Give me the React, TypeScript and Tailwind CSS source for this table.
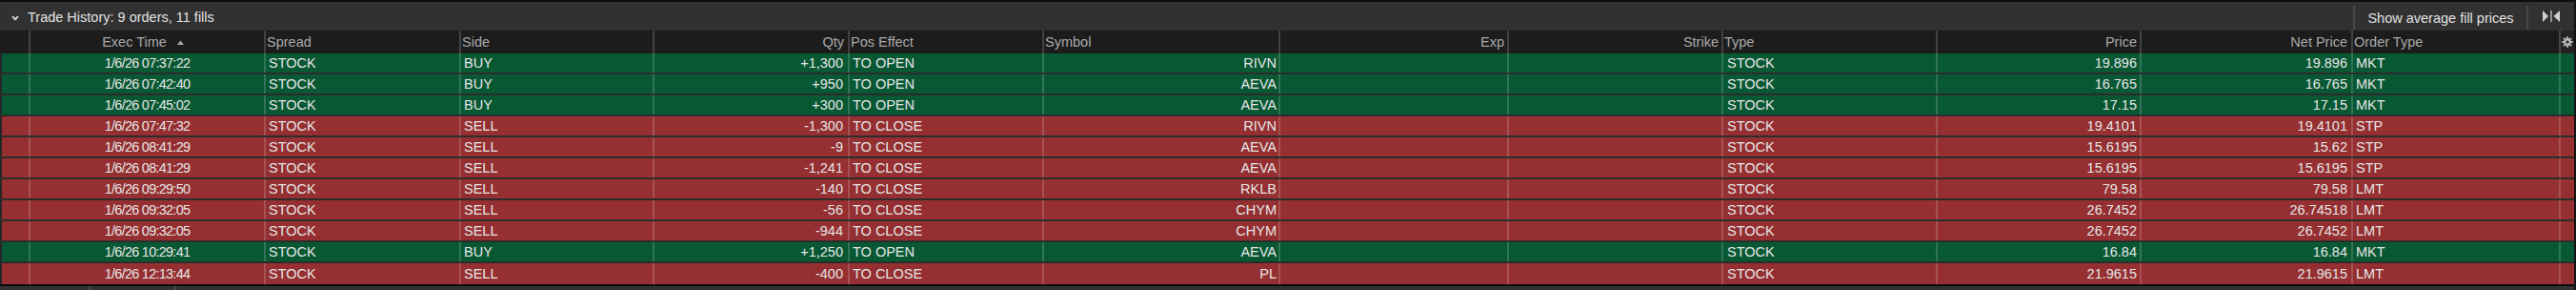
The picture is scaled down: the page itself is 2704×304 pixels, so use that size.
import React from 'react';

type Row = {
  t: string;
  side: string;
  qty: string;
  pos: string;
  sym: string;
  price: string;
  net: string;
  ot: string;
  buy: boolean;
};

const rows: Row[] = [
  { t: '1/6/26 07:37:22', side: 'BUY', qty: '+1,300', pos: 'TO OPEN', sym: 'RIVN', price: '19.896', net: '19.896', ot: 'MKT', buy: true },
  { t: '1/6/26 07:42:40', side: 'BUY', qty: '+950', pos: 'TO OPEN', sym: 'AEVA', price: '16.765', net: '16.765', ot: 'MKT', buy: true },
  { t: '1/6/26 07:45:02', side: 'BUY', qty: '+300', pos: 'TO OPEN', sym: 'AEVA', price: '17.15', net: '17.15', ot: 'MKT', buy: true },
  { t: '1/6/26 07:47:32', side: 'SELL', qty: '-1,300', pos: 'TO CLOSE', sym: 'RIVN', price: '19.4101', net: '19.4101', ot: 'STP', buy: false },
  { t: '1/6/26 08:41:29', side: 'SELL', qty: '-9', pos: 'TO CLOSE', sym: 'AEVA', price: '15.6195', net: '15.62', ot: 'STP', buy: false },
  { t: '1/6/26 08:41:29', side: 'SELL', qty: '-1,241', pos: 'TO CLOSE', sym: 'AEVA', price: '15.6195', net: '15.6195', ot: 'STP', buy: false },
  { t: '1/6/26 09:29:50', side: 'SELL', qty: '-140', pos: 'TO CLOSE', sym: 'RKLB', price: '79.58', net: '79.58', ot: 'LMT', buy: false },
  { t: '1/6/26 09:32:05', side: 'SELL', qty: '-56', pos: 'TO CLOSE', sym: 'CHYM', price: '26.7452', net: '26.74518', ot: 'LMT', buy: false },
  { t: '1/6/26 09:32:05', side: 'SELL', qty: '-944', pos: 'TO CLOSE', sym: 'CHYM', price: '26.7452', net: '26.7452', ot: 'LMT', buy: false },
  { t: '1/6/26 10:29:41', side: 'BUY', qty: '+1,250', pos: 'TO OPEN', sym: 'AEVA', price: '16.84', net: '16.84', ot: 'MKT', buy: true },
  { t: '1/6/26 12:13:44', side: 'SELL', qty: '-400', pos: 'TO CLOSE', sym: 'PL', price: '21.9615', net: '21.9615', ot: 'LMT', buy: false },
];

const DIV = 'border-l-2 border-[#ffffff2b]';

function Gear() {
  const teeth = [0, 45, 90, 135];
  return (
    <svg width="12" height="12" viewBox="0 0 12 12">
      {teeth.map((a) => (
        <rect key={a} x="5" y="0.2" width="2" height="11.6" fill="#b4b4b4" transform={`rotate(${a} 6 6)`} />
      ))}
      <circle cx="6" cy="6" r="3.9" fill="#b4b4b4" />
      <circle cx="6" cy="6" r="1.6" fill="#2a2a2a" />
    </svg>
  );
}

function HeaderRow() {
  const h = 'h-full flex items-center text-[#a9a9a9] whitespace-nowrap';
  return (
    <div className="flex h-[24px] bg-[#1c1c1c] shrink-0">
      <div className={`w-[30px] ${h}`} />
      <div className={`w-[247px] ${DIV} ${h} justify-center pr-[9px]`}>
        <span>Exec Time</span>
        <svg className="ml-[11px]" width="7" height="5" viewBox="0 0 7 5">
          <polygon points="0,5 3.5,0.5 7,5" fill="#a9a9a9" />
        </svg>
      </div>
      <div className={`w-[205px] ${DIV} ${h} pl-[1px]`}>Spread</div>
      <div className={`w-[203px] ${DIV} ${h} pl-[1px]`}>Side</div>
      <div className={`w-[205px] ${DIV} ${h} justify-end pr-[4px]`}>Qty</div>
      <div className={`w-[204px] ${DIV} ${h} pl-[1px]`}>Pos Effect</div>
      <div className={`w-[248px] ${DIV} ${h} pl-[1px]`}>Symbol</div>
      <div className={`w-[240px] ${DIV} ${h} justify-end pr-[3px]`}>Exp</div>
      <div className={`w-[225px] ${DIV} ${h} justify-end pr-[3px]`}>Strike</div>
      <div className={`w-[225px] ${DIV} ${h} pl-[1px]`}>Type</div>
      <div className={`w-[214px] ${DIV} ${h} justify-end pr-[3px]`}>Price</div>
      <div className={`w-[222px] ${DIV} ${h} justify-end pr-[4px]`}>Net Price</div>
      <div className={`w-[218px] ${DIV} ${h} pl-[1px]`}>Order Type</div>
      <div className={`w-[16px] ${DIV} ${h} justify-center bg-[#222222]`}>
        <Gear />
      </div>
    </div>
  );
}

function DataRow({ r, last }: { r: Row; last: boolean }) {
  const bg = r.buy ? 'bg-[#085834]' : 'bg-[#952f31]';
  const c = 'h-full flex items-center whitespace-nowrap';
  return (
    <div className={last ? 'h-[22px] shrink-0' : 'h-[22px] border-b-2 border-[#2c2c2c] shrink-0'}>
      <div className={`flex h-full ${bg} text-[#e6e6e6]`}>
        <div className={`w-[30px] ${c} border-l-2 border-[#262626]`} />
        <div className={`w-[247px] ${DIV} ${c} justify-center tracking-[-0.75px]`}>{r.t}</div>
        <div className={`w-[205px] ${DIV} ${c} pl-[3px]`}>STOCK</div>
        <div className={`w-[203px] ${DIV} ${c} pl-[3px]`}>{r.side}</div>
        <div className={`w-[205px] ${DIV} ${c} justify-end pr-[5px]`}>{r.qty}</div>
        <div className={`w-[204px] ${DIV} ${c} pl-[3px]`}>{r.pos}</div>
        <div className={`w-[248px] ${DIV} ${c} justify-end pr-[2px]`}>{r.sym}</div>
        <div className={`w-[240px] ${DIV} ${c}`} />
        <div className={`w-[225px] ${DIV} ${c}`} />
        <div className={`w-[225px] ${DIV} ${c} pl-[4px]`}>STOCK</div>
        <div className={`w-[214px] ${DIV} ${c} justify-end pr-[3px]`}>{r.price}</div>
        <div className={`w-[222px] ${DIV} ${c} justify-end pr-[4px]`}>{r.net}</div>
        <div className={`w-[218px] ${DIV} ${c} pl-[3px]`}>{r.ot}</div>
        <div className={`w-[16px] ${DIV} ${c}`} />
      </div>
    </div>
  );
}

export default function App() {
  return (
    <div className="w-[2704px] h-[304px] overflow-hidden flex flex-col bg-[#1a1a1a] border-r-2 border-[#141414] font-['Liberation_Sans',Arial,sans-serif] text-[14.5px] leading-none">
      <div className="h-[2px] bg-[#0e0e0e] shrink-0" />
      <div className="h-[30px] bg-[#313131] flex items-stretch shrink-0">
        <div className="flex items-center flex-1 pt-[3px]">
          <svg className="ml-[12px]" width="8" height="6" viewBox="0 0 8 6">
            <path d="M1 1.2 L4 4.4 L7 1.2" stroke="#d8d8d8" strokeWidth="1.9" fill="none" />
          </svg>
          <span className="ml-[9px] text-[#e2e2e2]">Trade History: 9 orders, 11 fills</span>
        </div>
        <div className="flex pt-[4px] pb-[1px]">
          <div className="w-[182px] border-l-2 border-[#474747] flex items-center justify-center pt-[2px] text-[#e2e2e2] whitespace-nowrap">
            Show average fill prices
          </div>
          <div className="w-[50px] border-l-2 border-[#474747] flex items-center justify-center pb-[4px]">
            <svg width="18" height="12" viewBox="0 0 18 12">
              <polygon points="0,0 6,6 0,12" fill="#d0d0d0" />
              <rect x="8.3" y="0" width="1.3" height="12" fill="#d0d0d0" />
              <polygon points="18,0 11.5,6 18,12" fill="#d0d0d0" />
            </svg>
          </div>
        </div>
      </div>
      <HeaderRow />
      {rows.map((r, i) => (
        <DataRow key={i} r={r} last={i === rows.length - 1} />
      ))}
      <div className="h-[2px] bg-[#0b0b0b] shrink-0" />
      <div className="h-[4px] bg-[#333333] flex shrink-0">
        <div className="w-[93px]" />
        <div className="w-[90px] border-l-2 border-[#4a4a4a]" />
        <div className="w-[90px] border-l-2 border-[#4a4a4a]" />
      </div>
    </div>
  );
}
